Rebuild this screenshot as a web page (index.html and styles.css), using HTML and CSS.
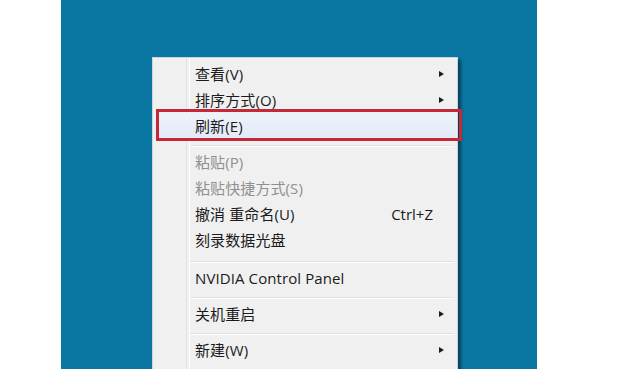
FILE: index.html
```html
<!DOCTYPE html>
<html lang="zh-CN">
<head>
  <meta charset="UTF-8" />
  <meta name="viewport" content="width=device-width, initial-scale=1.0" />
  <title>桌面右键菜单</title>
  <link rel="stylesheet" href="styles.css">
</head>
<body>
  <div class="desktop">
    <ul class="menu">
      <li class="item has-sub"><span class="label">查看(V)</span><span class="arrow"></span></li>
      <li class="item has-sub"><span class="label">排序方式(O)</span><span class="arrow"></span></li>
      <li class="item active"><span class="label">刷新(E)</span></li>
      <li class="sep"></li>
      <li class="item disabled"><span class="label">粘贴(P)</span></li>
      <li class="item disabled"><span class="label">粘贴快捷方式(S)</span></li>
      <li class="item"><span class="label">撤消 重命名(U)</span><span class="shortcut">Ctrl+Z</span></li>
      <li class="item"><span class="label">刻录数据光盘</span></li>
      <li class="sep sep-wide"></li>
      <li class="item"><span class="label">NVIDIA Control Panel</span></li>
      <li class="sep"></li>
      <li class="item has-sub"><span class="label">关机重启</span><span class="arrow"></span></li>
      <li class="sep"></li>
      <li class="item has-sub"><span class="label">新建(W)</span><span class="arrow"></span></li>
    </ul>
  </div>
</body>
</html>
```

FILE: styles.css
```css
* {
  margin: 0;
  padding: 0;
  box-sizing: border-box;
}

body {
  background: #fff;
  height: 369px;
  overflow: hidden;
  font-family: 'Open Sans', 'Noto Sans CJK SC', sans-serif;
  font-size: 15px;
  color: #1b1b1b;
}

/* Blue desktop area */
.desktop {
  margin-left: 61px;
  width: 476px;
  height: 369px;
  background: #0a76a2;
  padding: 57px 0 0 91px;
  overflow: hidden;
}

.menu {
  list-style: none;
  width: 306px;
  background: #f0f0f0;
  border: 1px solid #c9d6de;
  padding: 3px 1px 12px;
  box-shadow: 3px 3px 3px rgba(0, 0, 0, 0.45);
  position: relative;
}

/* Icon gutter on the left */
.menu::before {
  content: '';
  position: absolute;
  top: 0;
  bottom: 0;
  left: 33px;
  width: 2px;
  border-left: 1px solid #e2e3e3;
  border-right: 1px solid #fff;
}

.item {
  display: flex;
  align-items: center;
  height: 26px;
  padding: 0 12px 0 41px;
  position: relative;
  line-height: 1;
}

.label {
  flex: 1;
  letter-spacing: 0.1px;
}

.shortcut {
  margin-right: 11px;
}

.arrow {
  width: 0;
  height: 0;
  border-top: 3.5px solid transparent;
  border-bottom: 3.5px solid transparent;
  border-left: 5px solid #1b1b1b;
}

.disabled {
  color: #8f8f8f;
}

.active {
  background: linear-gradient(#eef3fb, #e3eaf6);
}

/* Red highlight frame drawn over the item */
.active::after {
  content: '';
  position: absolute;
  top: -4px;
  bottom: -2px;
  left: 2px;
  right: -6px;
  border: 3px solid #c4283b;
}

.sep {
  height: 2px;
  margin: 6px 2px 2px 35px;
  border-top: 1px solid #e0e0e0;
  border-bottom: 1px solid #fff;
}

.sep-wide {
  margin: 8px 2px 2px 35px;
}
```
